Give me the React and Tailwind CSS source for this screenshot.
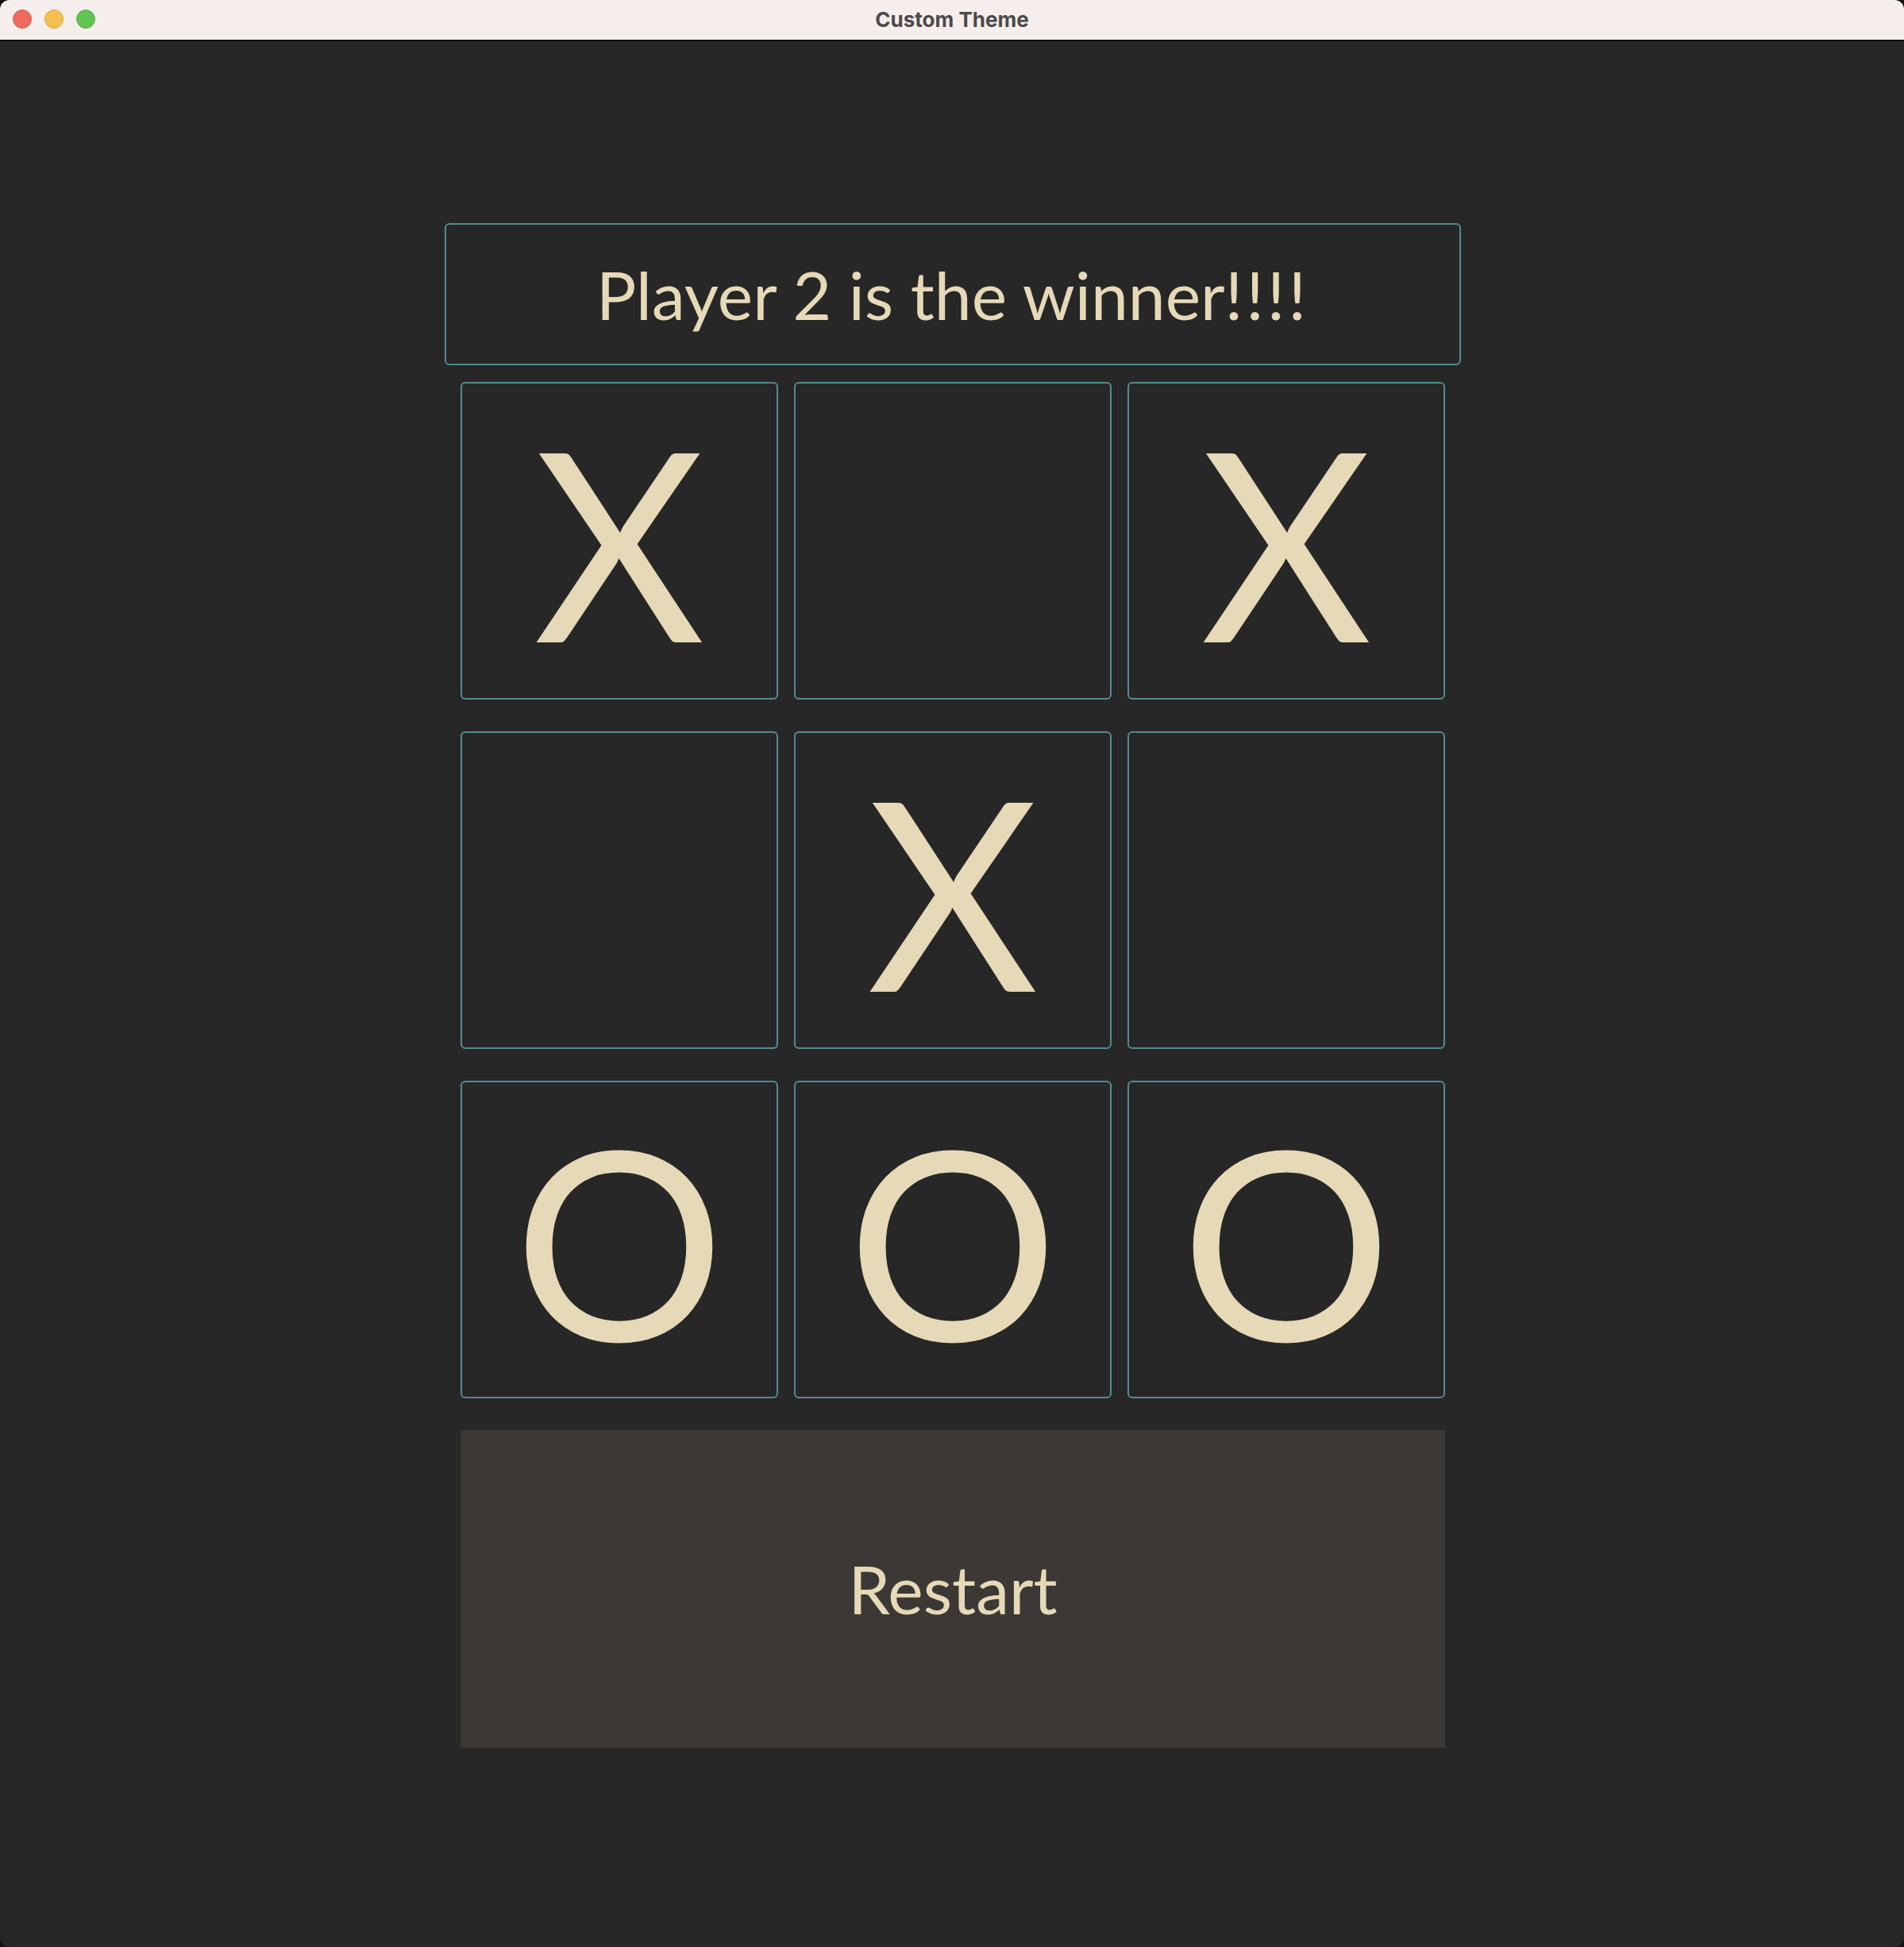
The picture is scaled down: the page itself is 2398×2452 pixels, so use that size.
import React from "react";

const board = ["X", "", "X", "", "X", "", "O", "O", "O"];

export default function App() {
  return (
    <div className="w-[2398px] h-[2452px] bg-[#111111]">
      <div className="w-full h-full rounded-[12px] overflow-hidden flex flex-col bg-[#272727]">
        <div className="relative h-[52px] shrink-0 bg-[#f6eeed] border-b-2 border-[#0d0d0d] flex items-center justify-center">
          <div className="absolute left-[16px] top-[12px] flex gap-[16px]">
            <div className="w-[24px] h-[24px] rounded-full bg-[#ee6a5f] border border-[#d85a50]" />
            <div className="w-[24px] h-[24px] rounded-full bg-[#f5bf4f] border border-[#d9a53d]" />
            <div className="w-[24px] h-[24px] rounded-full bg-[#61c554] border border-[#52ad46]" />
          </div>
          <span
            className="text-[26px] font-bold text-[#4a4a4a] leading-none"
            style={{ fontFamily: "Inter, 'Liberation Sans', sans-serif" }}
          >
            Custom Theme
          </span>
        </div>
        <div
          className="flex-1 flex flex-col items-center pt-[229px] pl-[2px] text-[#e6d9b7]"
          style={{ fontFamily: "Lato, 'Open Sans', sans-serif" }}
        >
          <div className="w-[1280px] h-[179px] border-2 border-[#578a8f] rounded-[6px] flex items-center justify-center text-[84px]">
            <span>
              Player 2 is the winner<span className="tracking-[4px]">!!!!</span>
            </span>
          </div>
          <div className="mt-[21px] grid grid-cols-[400px_400px_400px] gap-x-[20px] gap-y-[40px]">
            {board.map((v, i) => (
              <div
                key={i}
                className="w-[400px] h-[400px] border-2 border-[#578a8f] rounded-[6px] flex items-center justify-center text-[332px]"
              >
                {v}
              </div>
            ))}
          </div>
          <div className="mt-[40px] w-[1240px] h-[400px] bg-[#3c3835] flex items-center justify-center text-[84px]">
            Restart
          </div>
        </div>
      </div>
    </div>
  );
}
